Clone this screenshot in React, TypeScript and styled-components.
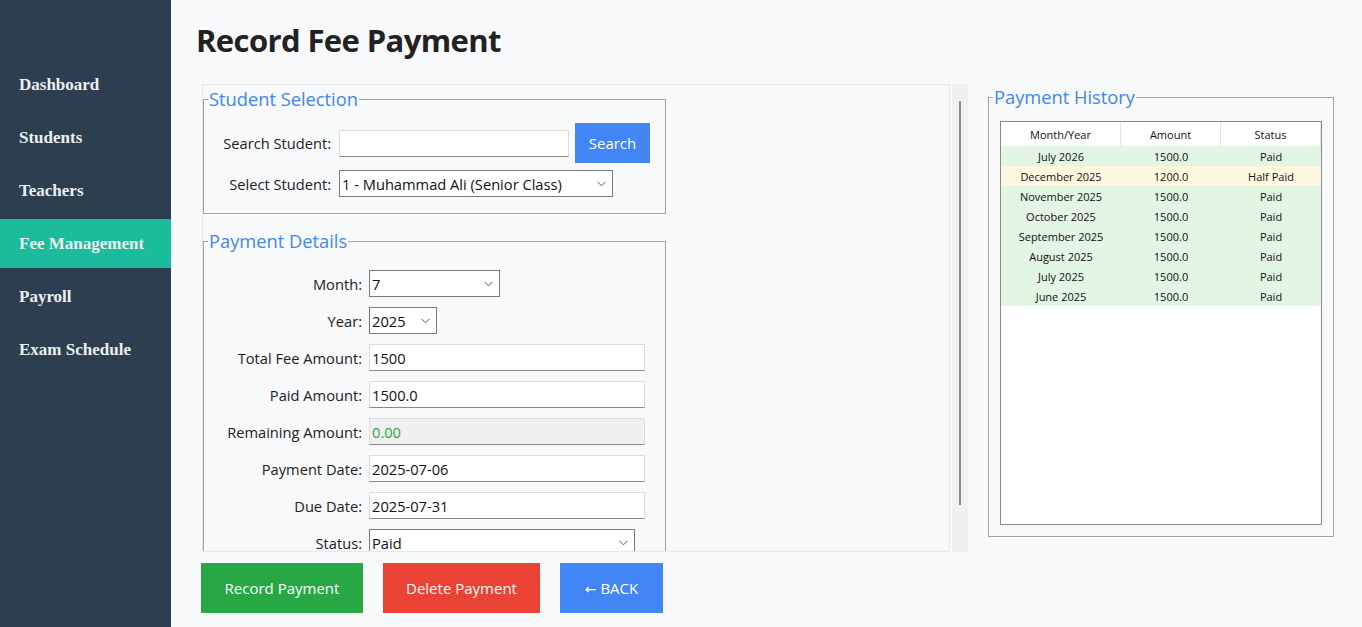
import React from "react";
import styled, { createGlobalStyle } from "styled-components";

const Global = createGlobalStyle`
  html, body { margin: 0; padding: 0; background: #f8f9fa; }
  body { font-family: "Open Sans", "Noto Sans", sans-serif; color: #222; }
  * { box-sizing: border-box; }
`;

const Shell = styled.div`
  display: flex;
  width: 1362px;
  height: 627px;
  overflow: hidden;
  background: #f8f9fa;
`;

const Sidebar = styled.nav`
  width: 171px;
  flex: none;
  background: #2c3e50;
  padding-top: 60px;
  display: flex;
  flex-direction: column;
  gap: 4px;
`;

const NavItem = styled.div<{ $active?: boolean }>`
  height: 49px;
  display: flex;
  align-items: center;
  padding-left: 19px;
  font-family: "Liberation Serif", "Times New Roman", serif;
  font-weight: bold;
  font-size: 17px;
  color: #ecf0f1;
  background: ${(p) => (p.$active ? "#1abc9c" : "transparent")};
`;

const Main = styled.main`
  flex: 1;
  padding: 0 29px 0 31px;
  display: flex;
  flex-direction: column;
`;

const Title = styled.h1`
  margin: 0 0 0 -6px;
  height: 84px;
  padding-top: 20px;
  font-size: 31px;
  letter-spacing: -0.6px;
  line-height: 40px;
  font-weight: 700;
  color: #222;
`;

const Body = styled.div`
  display: flex;
  gap: 20px;
  align-items: flex-start;
`;

const LeftColumn = styled.div`
  width: 766px;
  display: flex;
  flex-direction: column;
`;

const ScrollArea = styled.div`
  display: flex;
  gap: 2px;
  height: 468px;
`;

const Canvas = styled.div`
  width: 748px;
  height: 468px;
  border: 1px solid #e9e9e9;
  overflow: hidden;
  padding-top: 2px;
  display: flex;
  flex-direction: column;
  gap: 15px;
`;

const Scrollbar = styled.div`
  width: 16px;
  height: 468px;
  background: #f0f0f0;
  display: flex;
  justify-content: center;
  padding-top: 17px;
`;

const Thumb = styled.div`
  width: 2px;
  height: 404px;
  background: #8a8a8a;
`;

const Group = styled.fieldset<{ $top: number; $w: number; $bottom?: number; $left?: number }>`
  margin: 0;
  flex: none;
  width: ${(p) => p.$w}px;
  border: 1px solid #a0a0a0;
  box-shadow: inset 1px 1px 0 #ffffff, 1px 1px 0 #ffffff;
  padding: ${(p) => p.$top}px 0 ${(p) => p.$bottom ?? 0}px ${(p) => p.$left ?? 8}px;
  min-width: 0;
`;

const Legend = styled.legend<{ $shift: number }>`
  color: #4285f4;
  font-size: 18.3px;
  line-height: 24px;
  padding: 0 1px;
  margin-left: ${(p) => p.$shift}px;
`;

const Row = styled.div<{ $h?: number; $gap?: number }>`
  display: flex;
  align-items: center;
  height: ${(p) => p.$h ?? 27}px;
  margin-bottom: ${(p) => p.$gap ?? 10}px;
`;

const Label = styled.div<{ $w: number; $space?: number }>`
  width: ${(p) => p.$w}px;
  flex: none;
  text-align: right;
  font-size: 14.67px;
  color: #222;
  margin-right: ${(p) => p.$space ?? 7}px;
`;

const Entry = styled.input<{ $w: number; $disabled?: boolean }>`
  width: ${(p) => p.$w}px;
  height: 27px;
  border: 1px solid #dcdcdc;
  border-bottom: 1px solid #8a8a8a;
  background: ${(p) => (p.$disabled ? "#f0f0f0" : "#ffffff")};
  color: ${(p) => (p.$disabled ? "#28a745" : "#111")};
  font-family: "Open Sans", "Noto Sans", sans-serif;
  font-size: 14.67px;
  padding: 0 2px;
  outline: none;
`;

const Combo = styled.div<{ $w: number }>`
  width: ${(p) => p.$w}px;
  height: 27px;
  border: 1px solid #7a7a7a;
  background: #fff;
  display: flex;
  align-items: center;
  justify-content: space-between;
  padding: 0 6px 0 2px;
  font-size: 14.67px;
  color: #111;
`;

const BlueButton = styled.button`
  margin-left: 6px;
  width: 75px;
  height: 40px;
  border: none;
  background: #4285f4;
  color: #fff;
  font-family: "Open Sans", "Noto Sans", sans-serif;
  font-size: 15px;
`;

const Actions = styled.div`
  display: flex;
  gap: 20px;
  margin-top: 11px;
  margin-left: -1px;
`;

const ActionButton = styled.button<{ $bg: string; $w: number }>`
  width: ${(p) => p.$w}px;
  height: 50px;
  border: none;
  background: ${(p) => p.$bg};
  color: #fff;
  font-family: "Open Sans", "Noto Sans", sans-serif;
  font-size: 15px;
`;

const Arrow = styled.span`
  font-family: "DejaVu Sans", sans-serif;
  font-size: 14px;
`;

const Tree = styled.div`
  width: 322px;
  height: 404px;
  border: 1px solid #888;
  background: #fff;
`;

const TreeRow = styled.div<{ $bg?: string; $header?: boolean }>`
  display: grid;
  grid-template-columns: 120px 100px 100px;
  height: ${(p) => (p.$header ? 24 : 20)}px;
  background: ${(p) => p.$bg ?? "#fff"};
  font-size: 11px;
  color: #111;
`;

const Cell = styled.div<{ $header?: boolean }>`
  display: flex;
  align-items: center;
  justify-content: center;
  border-right: ${(p) => (p.$header ? "1px solid #e5e5e5" : "none")};
`;

const Chevron = () => (
  <svg width="9" height="6" viewBox="0 0 9 6">
    <path d="M0.5 0.8 L4.5 4.8 L8.5 0.8" fill="none" stroke="#555" strokeWidth="1" />
  </svg>
);

const nav = ["Dashboard", "Students", "Teachers", "Fee Management", "Payroll", "Exam Schedule"];

const history = [
  ["July 2026", "1500.0", "Paid"],
  ["December 2025", "1200.0", "Half Paid"],
  ["November 2025", "1500.0", "Paid"],
  ["October 2025", "1500.0", "Paid"],
  ["September 2025", "1500.0", "Paid"],
  ["August 2025", "1500.0", "Paid"],
  ["July 2025", "1500.0", "Paid"],
  ["June 2025", "1500.0", "Paid"],
];

export default function App() {
  return (
    <Shell>
      <Global />
      <Sidebar>
        {nav.map((n) => (
          <NavItem key={n} $active={n === "Fee Management"}>
            {n}
          </NavItem>
        ))}
      </Sidebar>
      <Main>
        <Title>Record Fee Payment</Title>
        <Body>
          <LeftColumn>
            <ScrollArea>
              <Canvas>
                <Group $top={12} $w={463} $bottom={16}>
                  <Legend $shift={-4}>Student Selection</Legend>
                  <Row $h={40} $gap={7}>
                    <Label $w={119} $space={8}>Search Student:</Label>
                    <Entry $w={230} readOnly value="" />
                    <BlueButton>Search</BlueButton>
                  </Row>
                  <Row $gap={0}>
                    <Label $w={119} $space={8}>Select Student:</Label>
                    <Combo $w={274}>
                      <span>1 - Muhammad Ali (Senior Class)</span>
                      <Chevron />
                    </Combo>
                  </Row>
                </Group>
                <Group $top={17} $w={463}>
                  <Legend $shift={-4}>Payment Details</Legend>
                  <Row>
                    <Label $w={150}>Month:</Label>
                    <Combo $w={131}>
                      <span>7</span>
                      <Chevron />
                    </Combo>
                  </Row>
                  <Row>
                    <Label $w={150}>Year:</Label>
                    <Combo $w={68}>
                      <span>2025</span>
                      <Chevron />
                    </Combo>
                  </Row>
                  <Row>
                    <Label $w={150}>Total Fee Amount:</Label>
                    <Entry $w={276} readOnly value="1500" />
                  </Row>
                  <Row>
                    <Label $w={150}>Paid Amount:</Label>
                    <Entry $w={276} readOnly value="1500.0" />
                  </Row>
                  <Row>
                    <Label $w={150}>Remaining Amount:</Label>
                    <Entry $w={276} $disabled readOnly value="0.00" />
                  </Row>
                  <Row>
                    <Label $w={150}>Payment Date:</Label>
                    <Entry $w={276} readOnly value="2025-07-06" />
                  </Row>
                  <Row>
                    <Label $w={150}>Due Date:</Label>
                    <Entry $w={276} readOnly value="2025-07-31" />
                  </Row>
                  <Row>
                    <Label $w={150}>Status:</Label>
                    <Combo $w={266}>
                      <span>Paid</span>
                      <Chevron />
                    </Combo>
                  </Row>
                </Group>
              </Canvas>
              <Scrollbar>
                <Thumb />
              </Scrollbar>
            </ScrollArea>
            <Actions>
              <ActionButton $bg="#28a745" $w={162}>Record Payment</ActionButton>
              <ActionButton $bg="#ea4335" $w={157}>Delete Payment</ActionButton>
              <ActionButton $bg="#4285f4" $w={103}>
                <Arrow>←</Arrow> BACK
              </ActionButton>
            </Actions>
          </LeftColumn>
          <Group $top={12} $w={346} $bottom={11} $left={11} style={{ marginTop: 1 }}>
            <Legend $shift={-7}>Payment History</Legend>
            <Tree>
              <TreeRow $header>
                <Cell $header>Month/Year</Cell>
                <Cell $header>Amount</Cell>
                <Cell $header>Status</Cell>
              </TreeRow>
              {history.map((r, i) => (
                <TreeRow key={i} $bg={r[2] === "Paid" ? "#e3f5e3" : "#fff8e1"}>
                  <Cell>{r[0]}</Cell>
                  <Cell>{r[1]}</Cell>
                  <Cell>{r[2]}</Cell>
                </TreeRow>
              ))}
            </Tree>
          </Group>
        </Body>
      </Main>
    </Shell>
  );
}
